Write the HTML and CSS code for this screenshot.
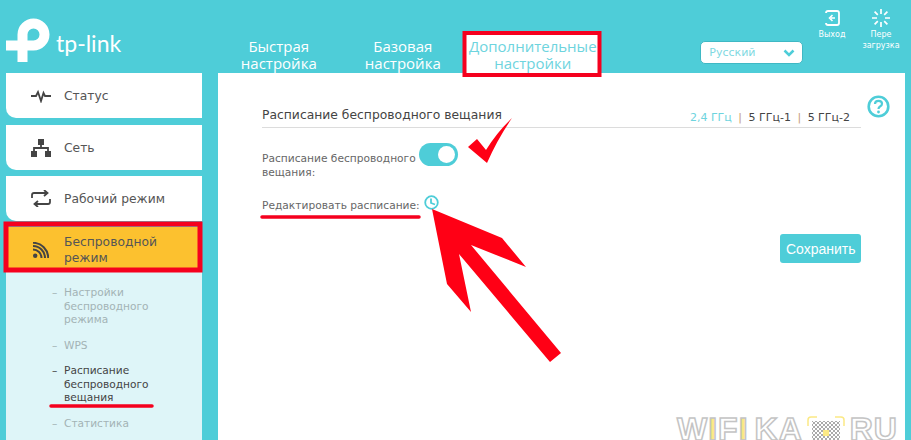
FILE: index.html
```html
<!DOCTYPE html>
<html lang="ru">
<head>
	<title>TP-Link</title>
	<meta charset="UTF-8">
	<link rel="stylesheet" href="styles.css">
</head>
<body>
	<header class="top">
		<a class="logo">
			<svg width="46" height="46" viewBox="5 18 46 46"><path d="M22.500 62V34.500A11 11 0 0 1 44.500 34.500A11 11 0 0 1 33.500 45.500H6" fill="none" stroke="#fff" stroke-width="10"/></svg>
			<span class="logo-text">tp-link</span>
		</a>
		<nav class="tabs">
			<a class="tab tab-quick">Быстрая<br>настройка</a>
			<a class="tab tab-basic">Базовая<br>настройка</a>
			<a class="tab tab-adv">Дополнительные<br>настройки</a>
		</nav>
		<div class="lang">
			<span>Русский</span>
			<svg width="12" height="8" viewBox="0 0 12 8"><path d="M1.500 1.500L6 6L10.500 1.500" fill="none" stroke="#4ecdd8" stroke-width="2.500"/></svg>
		</div>
		<div class="actions">
			<a class="action">
				<svg width="18" height="18" viewBox="0 0 18 18"><path d="M5 2H14Q16 2 16 4V14Q16 16 14 16H5Q3 16 3 14M3 4Q3 2 5 2" fill="none" stroke="#fff" stroke-width="1.800"/><path d="M12 9H8M9.500 6L6.500 9L9.500 12" fill="none" stroke="#fff" stroke-width="1.600"/></svg>
				<span>Выход</span>
			</a>
			<a class="action action-reboot">
				<svg width="18" height="18" viewBox="0 0 18 18"><path d="M9 0V5M9 13V18M0 9H5M13 9H18M2.600 2.600L5.800 5.800M12.200 12.200L15.400 15.400M15.400 2.600L12.200 5.800M5.800 12.200L2.600 15.400" stroke="#fff" stroke-width="1.700"/></svg>
				<span>Пере<br>загрузка</span>
			</a>
		</div>
	</header>

	<div class="content">
		<aside class="side">
			<a class="side-item side-first">
				<svg class="side-icon" width="20" height="14" viewBox="0 0 20 14"><path d="M0 7H5L7 3L10 12L12.500 4L14 7H20" fill="none" stroke="#444" stroke-width="1.800"/></svg>
				<span>Статус</span>
			</a>
			<a class="side-item">
				<svg class="side-icon" width="20" height="18" viewBox="0 0 20 18"><path d="M7 0H13V6H7ZM0 12H6V18H0ZM14 12H20V18H14Z" fill="#444"/><path d="M3 13V9H17V13M10 5V10" fill="none" stroke="#444" stroke-width="1.800"/></svg>
				<span>Сеть</span>
			</a>
			<a class="side-item">
				<svg class="side-icon" width="20" height="17" viewBox="0 0 20 17"><path d="M1 8V5Q1 3 3 3H16M13 0L16.500 3L13 6M19 9V12Q19 14 17 14H4M7 11L3.500 14L7 17" fill="none" stroke="#444" stroke-width="1.800"/></svg>
				<span>Рабочий режим</span>
			</a>
			<a class="side-item side-active">
				<svg class="side-icon" width="16" height="16" viewBox="0 0 16 16"><circle cx="2.200" cy="13.800" r="2.200" fill="#444"/><path d="M0 7.500A8.500 8.500 0 0 1 8.500 16M0 4A12 12 0 0 1 12 16M0 .8A15.200 15.200 0 0 1 15.200 16" fill="none" stroke="#444" stroke-width="2"/></svg>
				<span>Беспроводной<br>режим</span>
			</a>
			<ul class="sub">
				<li>Настройки<br>беспроводного<br>режима</li>
				<li>WPS</li>
				<li class="sub-on">Расписание<br>беспроводного<br>вещания</li>
				<li>Статистика</li>
			</ul>
		</aside>

		<main class="panel">
			<div class="title-row">
				<h1>Расписание беспроводного вещания</h1>
				<div class="bands"><b>2,4 ГГц</b><i>|</i>5 ГГц-1<i>|</i>5 ГГц-2</div>
			</div>
			<div class="row row-toggle">
				<label>Расписание беспроводного<br>вещания:</label>
				<span class="toggle"></span>
			</div>
			<div class="row row-edit">
				<label>Редактировать расписание:</label>
				<svg class="clock" width="15" height="15" viewBox="0 0 15 15"><circle cx="7.500" cy="7.500" r="6.300" fill="none" stroke="#4ecdd8" stroke-width="1.800"/><path d="M7 3.500V8L11 9.500" fill="none" stroke="#4ecdd8" stroke-width="1.800"/></svg>
			</div>
			<div class="save-row"><button class="save">Сохранить</button></div>
			<svg class="help" width="23" height="23" viewBox="0 0 23 23"><circle cx="11.500" cy="11.500" r="9.800" fill="none" stroke="#4ecdd8" stroke-width="2.600"/><path d="M8 9Q8 5.800 11.500 5.800Q15 5.800 15 8.800Q15 10.500 13 11.500Q11.500 12.300 11.500 14" fill="none" stroke="#4ecdd8" stroke-width="2.200"/><circle cx="11.500" cy="17" r="1.400" fill="#4ecdd8"/></svg>
		</main>
	</div>

	<!-- red marks drawn over the screenshot -->
	<svg class="marks" width="911" height="440" viewBox="0 0 911 440">
		<rect x="464.500" y="33" width="135" height="42" fill="none" stroke="#f5001e" stroke-width="4"/>
		<rect x="6" y="224" width="194" height="46" fill="none" stroke="#f5001e" stroke-width="5"/>
		<path d="M51 406H152M262 217H419" stroke="#f5001e" stroke-width="3.500" stroke-linecap="round"/>
		<path d="M432 209L502 238L526 267L471 245L561 353L550 362L459 254L471 312L447 284Z" fill="#ff0015"/>
		<path d="M468 147L477 139L486 150Q497 132 512 118Q497 140 487 163Z" fill="#ff0015"/>
	</svg>

	<div class="mark-site">
		<span>W</span><span class="mark-i">I</span><span>F</span><span class="mark-i">I</span><span class="mark-k">K</span><span>A</span>
		<svg class="mark-qr" width="38" height="26" viewBox="0 0 38 26">
			<defs><pattern id="qr" width="4" height="4" patternUnits="userSpaceOnUse"><path d="M0 0H2V2H0ZM2 2H4V4H2Z" fill="#aaa"/></pattern></defs>
			<path d="M1 10V4Q1 1 4 1H10M28 1H34Q37 1 37 4V10" fill="none" stroke="#fbe985" stroke-width="1.500"/>
			<rect x="5" y="5" width="28" height="21" fill="url(#qr)"/>
			<rect x="16" y="14" width="6" height="6" fill="#fbe985"/>
		</svg>
		<span>R</span><span>U</span>
	</div>
</body>
</html>
```

FILE: styles.css
```css
* {box-sizing: border-box;}
html, body {height: 100%;}
body {
	margin: 0;
	height: 440px;
	overflow: hidden;
	position: relative;
	background-color: #4ecdd8;
	color: #555;
	font-family: "DejaVu Sans", sans-serif;
	font-size: 11px;
}
ul {list-style: none; margin: 0; padding: 0;}

/* header */
.top {
	display: flex;
	height: 73px;
	position: relative;
}
.logo {
	display: flex;
	align-items: flex-start;
	padding: 18px 0 0 5px;
	width: 218px;
}
.logo-text {
	margin: 11px 0 0 5px;
	color: #fff;
	font-family: "Lato", sans-serif;
	font-size: 23px;
}
.tabs {
	display: flex;
	align-items: flex-end;
}
.tab {
	display: block;
	padding-bottom: 1px;
	text-align: center;
	color: #fff;
	font-family: "Open Sans", sans-serif;
	font-size: 15px;
	line-height: 17px;
}
.tab-quick {width: 123px;}
.tab-basic {width: 125px;}
.tab-adv {
	width: 137px;
	height: 41px;
	margin-left: -1px;
	padding-top: 6px;
	background-color: #fff;
	color: #6ed4de;
}
.lang {
	display: flex;
	align-items: center;
	justify-content: space-between;
	width: 103px;
	height: 23px;
	margin: 41px 0 0 99px;
	padding: 0 7px 0 8px;
	background-color: #fff;
	border: 1px solid #3fb8c4;
	border-radius: 5px;
	color: #7fd9e2;
	font-size: 11px;
}
.actions {
	display: flex;
	margin-left: 10px;
}
.action {
	display: flex;
	flex-direction: column;
	align-items: center;
	width: 38px;
	padding-top: 9px;
	color: #fff;
	font-size: 8px;
	line-height: 11px;
	text-align: center;
}
.action span {margin-top: 2px;}
.action-reboot {width: 60px;}

/* layout */
.content {
	display: flex;
	gap: 16px;
	padding: 0 6px;
	height: 367px;
}
.side {width: 196px; flex: none;}
.panel {
	flex: 1;
	position: relative;
	background-color: #fff;
	padding: 29px 44px 0;
}

/* sidebar */
.side-item {
	display: flex;
	align-items: center;
	height: 45px;
	margin-bottom: 6px;
	background-color: #fff;
	border-bottom-left-radius: 10px;
	color: #555;
	font-size: 12.300px;
	line-height: 16px;
}
.side-first {margin-bottom: 7px; padding-top: 1px;}
.side-icon {
	flex: none;
	margin-left: 25px;
	margin-right: 13px;
}
.side-active {
	margin-bottom: 0;
	background-color: #fcc12f;
	border-radius: 0;
}
.side-active .side-icon {margin: 0 15px 0 27px;}
.sub {
	height: 168px;
	padding: 14px 0 0 58px;
	background-color: #def5f8;
	color: #a3b3b5;
	font-size: 10.600px;
	line-height: 13.500px;
}
.sub li {position: relative; margin-bottom: 12px;}
.sub li::before {
	content: "–";
	position: absolute;
	left: -12px;
}
.sub .sub-on {color: #444;}

/* panel */
.title-row {
	display: flex;
	justify-content: space-between;
	align-items: flex-end;
	width: 599px;
	height: 22px;
	padding-bottom: 3px;
	box-sizing: content-box;
	border-bottom: 1px solid #dcdcdc;
}
h1 {
	margin: 0 0 2px;
	font-weight: normal;
	font-size: 12.350px;
	color: #444;
}
.bands {font-size: 11px; color: #444; padding-right: 11px;}
.bands b {font-weight: normal; color: #6ed4de;}
.bands i {font-style: normal; color: #c49a7a; margin: 0 6.500px;}
.row {display: flex; color: #666; font-size: 10.650px;}
.row label {line-height: 14px;}
.row-toggle {margin-top: 15px; height: 46px;}
.row-toggle label {margin-top: 9px;}
.toggle {
	position: relative;
	width: 39px;
	height: 23px;
	margin-left: 3px;
	border-radius: 12px;
	background-color: #4ecdd8;
}
.toggle::after {
	content: "";
	position: absolute;
	right: 3px;
	top: 3px;
	width: 17px;
	height: 17px;
	border-radius: 50%;
	background-color: #fff;
}
.row-edit {align-items: flex-end; height: 24px;}
.clock {margin: 0 0 3px 4px;}
.save-row {display: flex; justify-content: flex-end; width: 599px; margin-top: 21px;}
.save {
	width: 81px;
	height: 29px;
	border: 0;
	border-radius: 3px;
	background-color: #4ecdd8;
	color: #fff;
	font-family: "Liberation Sans", sans-serif;
	font-size: 14px;
}
.help {position: absolute; right: 15px; top: 22px;}

/* overlays */
.marks {position: absolute; left: 0; top: 0; pointer-events: none;}
.mark-site {
	position: absolute;
	left: 677px;
	top: 410px;
	display: flex;
	align-items: flex-start;
	gap: 1px;
	color: #fff;
	-webkit-text-stroke: 1.500px #c4c4c4;
	font-family: "Liberation Sans", sans-serif;
	font-weight: bold;
	font-size: 32px;
	line-height: 38px;
}
.mark-i {color: #fbe985;}
.mark-k {margin-left: 6px;}
.mark-qr {margin: 6px 4px 0;}
```
